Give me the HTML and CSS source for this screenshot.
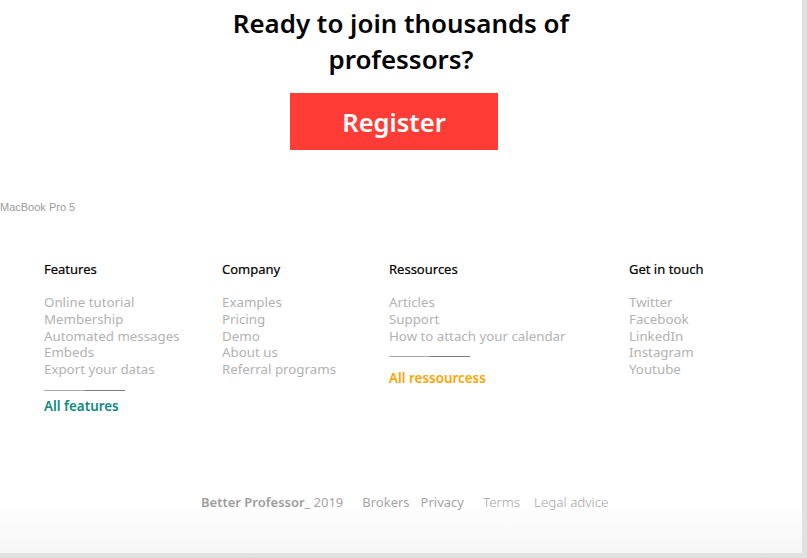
FILE: index.html
```html
<!DOCTYPE html>
<html lang="en">
<head>
<meta charset="utf-8">
<title>Better Professor</title>
<link rel="stylesheet" href="styles.css">
</head>
<body>
<div class="page">
  <section class="cta">
    <h1 class="cta-title">Ready to join thousands of<br>professors?</h1>
    <a class="cta-button" href="#">Register</a>
  </section>
  <div class="device-label">MacBook Pro 5</div>
  <footer class="footer">
    <div class="cols">
      <div class="col col-features">
        <h3 class="col-title">Features</h3>
        <ul class="links">
          <li>Online tutorial</li>
          <li>Membership</li>
          <li>Automated messages</li>
          <li>Embeds</li>
          <li>Export your datas</li>
        </ul>
        <div class="rule"></div>
        <a class="more more-teal" href="#">All features</a>
      </div>
      <div class="col col-company">
        <h3 class="col-title">Company</h3>
        <ul class="links">
          <li>Examples</li>
          <li>Pricing</li>
          <li>Demo</li>
          <li>About us</li>
          <li>Referral programs</li>
        </ul>
      </div>
      <div class="col col-res">
        <h3 class="col-title">Ressources</h3>
        <ul class="links">
          <li>Articles</li>
          <li>Support</li>
          <li>How to attach your calendar</li>
        </ul>
        <div class="rule"></div>
        <a class="more more-orange" href="#">All ressourcess</a>
      </div>
      <div class="col col-touch">
        <h3 class="col-title">Get in touch</h3>
        <ul class="links">
          <li>Twitter</li>
          <li>Facebook</li>
          <li>LinkedIn</li>
          <li>Instagram</li>
          <li>Youtube</li>
        </ul>
      </div>
    </div>
    <div class="bottom">
      <span class="brand"><b>Better Professor_</b> 2019</span>
      <span class="b-brokers">Brokers</span>
      <span class="b-privacy">Privacy</span>
      <span class="b-terms">Terms</span>
      <span class="b-legal">Legal advice</span>
    </div>
  </footer>
</div>
</body>
</html>
```

FILE: styles.css
```css
html, body {
  margin: 0;
  padding: 0;
  background: #e1e1e1;
}
body {
  width: 807px;
  height: 558px;
  overflow: hidden;
  font-family: "Noto Sans", "Open Sans", sans-serif;
}
.page {
  width: 802px;
  height: 553px;
  background: linear-gradient(to bottom, #ffffff 0, #ffffff 500px, #f6f6f6 553px);
  display: flex;
  flex-direction: column;
}
.cta {
  display: flex;
  flex-direction: column;
  align-items: center;
  padding-top: 5px;
}
.cta-title {
  margin: 0;
  font-size: 25.9px;
  font-weight: 600;
  line-height: 36px;
  color: #050505;
  text-align: center;
}
.cta-button {
  margin-top: 16px;
  width: 208px;
  height: 57px;
  margin-left: -14px;
  background: #ff3d36;
  color: #ffffff;
  text-decoration: none;
  font-size: 25.5px;
  font-weight: 600;
  display: flex;
  align-items: center;
  justify-content: center;
}
.device-label {
  margin-top: 50px;
  font-family: "Liberation Sans", Arial, sans-serif;
  font-size: 11px;
  color: #9a9a9a;
  line-height: 14px;
}
.footer {
  padding-left: 44px;
  margin-top: 47px;
  flex: 1;
  display: flex;
  flex-direction: column;
}
.cols {
  display: flex;
}
.col-features { width: 178px; }
.col-company { width: 167px; }
.col-res { width: 240px; }
.col-touch { width: 150px; }
.col-title {
  margin: 0;
  font-size: 13px;
  font-weight: 400;
  color: #000;
  line-height: 16px;
  -webkit-text-stroke: 0.2px #000;
}
.links {
  list-style: none;
  margin: 17px 0 0;
  padding: 0;
  font-size: 13.3px;
  font-weight: 400;
  line-height: 16.8px;
  color: #b2b2b2;
}
.rule {
  margin-top: 12px;
  width: 81px;
  height: 1px;
  background: linear-gradient(to right, #a9a9a9 50%, #7c7c7c 50%);
}
.more {
  display: block;
  margin-top: 7px;
  font-size: 13.4px;
  font-weight: 600;
  line-height: 17px;
  text-decoration: none;
}
.col-res .more { margin-top: 13px; }
.more-teal { color: #0e8a7e; }
.more-orange { color: #ffa300; }
.bottom {
  margin-top: auto;
  margin-bottom: 43px;
  display: flex;
  font-size: 13px;
  line-height: 16px;
  color: #a5a5a5;
  padding-left: 157px;
}
.brand b {
  font-weight: 600;
  color: #9d9d9d;
}
.brand { margin-right: 19px; font-weight: 400; }
.b-brokers { margin-right: 11px; }
.b-privacy { margin-right: 19px; }
.b-terms { margin-right: 14px; }
.b-terms, .b-legal { font-weight: 300; font-size: 13.4px; }
```
